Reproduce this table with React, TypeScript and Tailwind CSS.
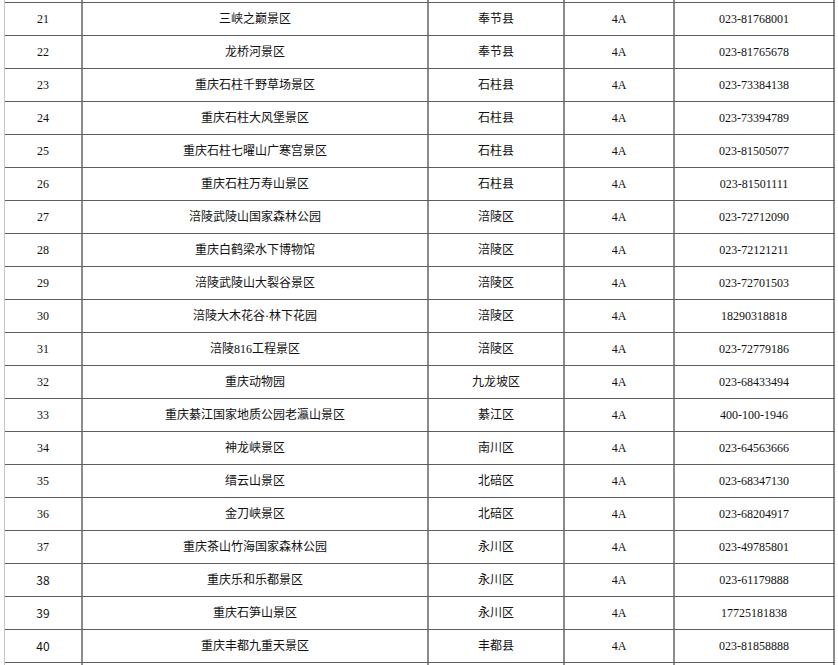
import React from "react";

type Spot = {
  no: number;
  name: string;
  area: string;
  level: string;
  phone: string;
};

// Scenic spots, rows 21-40
const spots: Spot[] = [
  { no: 21, name: "三峡之巅景区", area: "奉节县", level: "4A", phone: "023-81768001" },
  { no: 22, name: "龙桥河景区", area: "奉节县", level: "4A", phone: "023-81765678" },
  { no: 23, name: "重庆石柱千野草场景区", area: "石柱县", level: "4A", phone: "023-73384138" },
  { no: 24, name: "重庆石柱大风堡景区", area: "石柱县", level: "4A", phone: "023-73394789" },
  { no: 25, name: "重庆石柱七曜山广寒宫景区", area: "石柱县", level: "4A", phone: "023-81505077" },
  { no: 26, name: "重庆石柱万寿山景区", area: "石柱县", level: "4A", phone: "023-81501111" },
  { no: 27, name: "涪陵武陵山国家森林公园", area: "涪陵区", level: "4A", phone: "023-72712090" },
  { no: 28, name: "重庆白鹤梁水下博物馆", area: "涪陵区", level: "4A", phone: "023-72121211" },
  { no: 29, name: "涪陵武陵山大裂谷景区", area: "涪陵区", level: "4A", phone: "023-72701503" },
  { no: 30, name: "涪陵大木花谷·林下花园", area: "涪陵区", level: "4A", phone: "18290318818" },
  { no: 31, name: "涪陵816工程景区", area: "涪陵区", level: "4A", phone: "023-72779186" },
  { no: 32, name: "重庆动物园", area: "九龙坡区", level: "4A", phone: "023-68433494" },
  { no: 33, name: "重庆綦江国家地质公园老瀛山景区", area: "綦江区", level: "4A", phone: "400-100-1946" },
  { no: 34, name: "神龙峡景区", area: "南川区", level: "4A", phone: "023-64563666" },
  { no: 35, name: "缙云山景区", area: "北碚区", level: "4A", phone: "023-68347130" },
  { no: 36, name: "金刀峡景区", area: "北碚区", level: "4A", phone: "023-68204917" },
  { no: 37, name: "重庆茶山竹海国家森林公园", area: "永川区", level: "4A", phone: "023-49785801" },
  { no: 38, name: "重庆乐和乐都景区", area: "永川区", level: "4A", phone: "023-61179888" },
  { no: 39, name: "重庆石笋山景区", area: "永川区", level: "4A", phone: "17725181838" },
  { no: 40, name: "重庆丰都九重天景区", area: "丰都县", level: "4A", phone: "023-81858888" },
];

const cell =
  "flex items-center justify-center border-r-2 border-[#8c8c8c] text-center";

// Edge rows cut off by the viewport: only the vertical rules show
const StubRow: React.FC<{ bottom?: boolean }> = ({ bottom }) => (
  <div className={`flex ${bottom ? "h-[3px]" : "h-[3px] border-b border-[#5e5e5e]"}`}>
    <div className={`${cell} w-[78px]`} />
    <div className={`${cell} w-[346px]`} />
    <div className={`${cell} w-[136px]`} />
    <div className={`${cell} w-[110px]`} />
    <div className={`${cell} w-[160px]`} />
  </div>
);

const SpotRow: React.FC<{ spot: Spot }> = ({ spot }) => (
  <div className="flex h-[33px] border-b border-[#5e5e5e]">
    <div
      className={`${cell} w-[78px] ${
        spot.no >= 38
          ? "font-['Noto_Sans_CJK_SC',sans-serif]"
          : "font-['Liberation_Serif',serif]"
      }`}
    >
      {spot.no}
    </div>
    <div className={`${cell} w-[346px]`}>{spot.name}</div>
    <div className={`${cell} w-[136px]`}>{spot.area}</div>
    <div className={`${cell} w-[110px]`}>{spot.level}</div>
    <div className={`${cell} w-[160px]`}>{spot.phone}</div>
  </div>
);

export default function App() {
  return (
    <div className="h-[665px] w-[838px] overflow-hidden bg-white pl-[4px]">
      <div className="w-[831px] border-l border-[#c4c4c4] font-['Liberation_Serif','Noto_Sans_CJK_SC',serif] text-[12px] leading-none text-[#111]">
        <StubRow />
        {spots.map((spot) => (
          <SpotRow key={spot.no} spot={spot} />
        ))}
        <StubRow bottom />
      </div>
    </div>
  );
}
